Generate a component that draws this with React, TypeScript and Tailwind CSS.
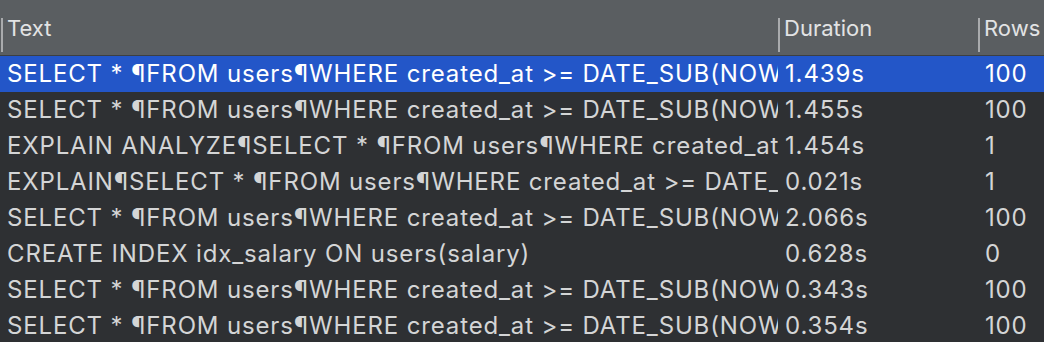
const rows = [
  { text: 'SELECT * ¶FROM users¶WHERE created_at >= DATE_SUB(NOW(), INTERVAL 30 DAY)', duration: '1.439s', count: '100' },
  { text: 'SELECT * ¶FROM users¶WHERE created_at >= DATE_SUB(NOW(), INTERVAL 30 DAY)', duration: '1.455s', count: '100' },
  { text: 'EXPLAIN ANALYZE¶SELECT * ¶FROM users¶WHERE created_at >= DATE_SUB(NOW(), INTERVAL 30 DAY)', duration: '1.454s', count: '1' },
  { text: 'EXPLAIN¶SELECT * ¶FROM users¶WHERE created_at >= DATE_SUB(NOW(), INTERVAL 30 DAY)', duration: '0.021s', count: '1' },
  { text: 'SELECT * ¶FROM users¶WHERE created_at >= DATE_SUB(NOW(), INTERVAL 30 DAY)', duration: '2.066s', count: '100' },
  { text: 'CREATE INDEX idx_salary ON users(salary)', duration: '0.628s', count: '0' },
  { text: 'SELECT * ¶FROM users¶WHERE created_at >= DATE_SUB(NOW(), INTERVAL 30 DAY)', duration: '0.343s', count: '100' },
  { text: 'SELECT * ¶FROM users¶WHERE created_at >= DATE_SUB(NOW(), INTERVAL 30 DAY)', duration: '0.354s', count: '100' },
];

const HeaderCell = ({ label, className }: { label: string; className: string }) => (
  <div className={`flex items-start h-full ${className}`}>
    <div className="w-[2px] h-[34px] mt-[18px] bg-[#a9abad] shrink-0"></div>
    <span className="pl-[4px] pt-[14px] leading-[28px] whitespace-nowrap">{label}</span>
  </div>
);

const App = () => {
  return (
    <div className="w-[1044px] h-[342px] overflow-hidden bg-[#2e3033]" style={{ fontFamily: 'Inter, "Liberation Sans", sans-serif' }}>
      <div className="flex h-[56px] bg-[#5a5e61] border-b border-[#3c3f41] text-[#e2e3e4] text-[22px]">
        <HeaderCell label="Text" className="w-[778px] pl-[1px]" />
        <HeaderCell label="Duration" className="w-[200px]" />
        <HeaderCell label="Rows" className="flex-1" />
      </div>
      {rows.map((r, i) => (
        <div key={i} className={`flex h-[36px] items-center text-[24px] leading-[30px] tracking-[0.85px] ${i === 0 ? 'bg-[#2356c8] text-white' : 'text-[#d4d5d6]'}`}>
          <div className="w-[778px] shrink-0 pl-[7px] overflow-hidden whitespace-nowrap">{r.text}</div>
          <div className="w-[200px] shrink-0 pl-[7px] whitespace-nowrap">{r.duration}</div>
          <div className="flex-1 pl-[7px] whitespace-nowrap">{r.count}</div>
        </div>
      ))}
    </div>
  );
};

export default App;
